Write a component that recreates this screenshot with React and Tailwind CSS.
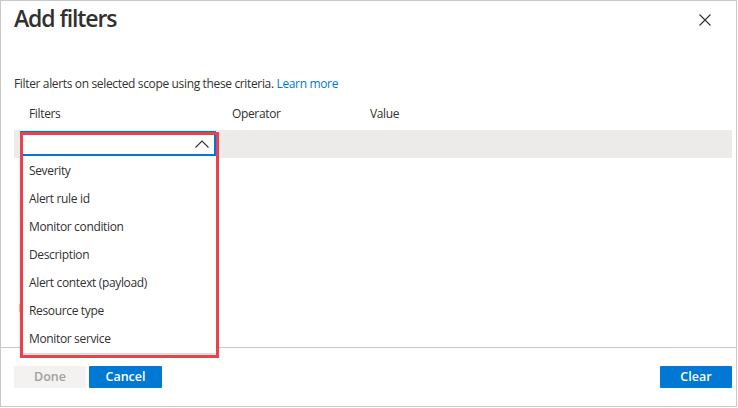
export default function App() {
  const options = [
    "Severity",
    "Alert rule id",
    "Monitor condition",
    "Description",
    "Alert context (payload)",
    "Resource type",
    "Monitor service",
  ];
  return (
    <div className="w-[738px] h-[408px] bg-white font-['Segoe_UI','Open_Sans',sans-serif] text-[#323130]">
      <div className="w-[737px] h-[407px] border border-[#c8c8c8] flex flex-col">
        <div className="h-[60px] flex justify-between items-start pl-[13px] pr-[25px]">
          <h1 className="text-[23px] leading-[32px] font-semibold tracking-[-1.1px] mt-[1px]">Add filters</h1>
          <svg width="12" height="12" viewBox="0 0 12 12" className="mt-[13px]">
            <path d="M0.5 0.5 L11.5 11.5 M11.5 0.5 L0.5 11.5" stroke="#323130" strokeWidth="1.1" fill="none" />
          </svg>
        </div>
        <div className="flex-1 flex flex-col pl-[13px] pr-[4px]">
          <p className="text-[12px] tracking-[-0.35px] leading-[20px] mt-[13px]">
            Filter alerts on selected scope using these criteria.{" "}
            <span className="text-[#0078d4]">Learn more</span>
          </p>
          <div className="flex text-[12px] tracking-[-0.35px] leading-[20px] mt-[10px] pl-[15px]">
            <span className="w-[203px]">Filters</span>
            <span className="w-[138px]">Operator</span>
            <span>Value</span>
          </div>
          <div className="relative h-[28px] bg-[#edebe9] mt-[6px]">
            <div className="absolute left-[6px] top-[1px] w-[196px] z-10">
              <div className="h-[25px] border-2 border-[#0078d4] bg-white flex items-center justify-end pr-[5px]">
                <svg width="14" height="8" viewBox="0 0 14 8">
                  <path d="M0.5 7.5 L7 1 L13.5 7.5" stroke="#323130" strokeWidth="1.1" fill="none" />
                </svg>
              </div>
              <div className="bg-white shadow-[0_2px_3px_rgba(0,0,0,0.18)] pt-[1px]">
                {options.map((o) => (
                  <div key={o} className="h-[28px] flex items-center pl-[9px] text-[12px] tracking-[-0.35px]">
                    {o}
                  </div>
                ))}
              </div>
            </div>
            <div className="absolute left-[6px] top-[2px] w-[199px] h-[226px] border-[3px] border-[#e8434a] z-20 pointer-events-none" />
            <div className="absolute left-[5px] top-[174px] w-[2px] h-[8px] bg-[#f2c8a0]" />
          </div>
        </div>
        <div className="h-[59px] border-t border-[#c8c8c8] flex items-start justify-between pt-[18px] pl-[13px] pr-[4px]">
          <div className="flex gap-[3px]">
            <button className="w-[72px] h-[22px] bg-[#f3f2f1] text-[#a19f9d] text-[12.5px] font-semibold rounded-[1px]">Done</button>
            <button className="w-[73px] h-[22px] bg-[#0078d4] text-white text-[12.5px] font-semibold rounded-[1px]">Cancel</button>
          </div>
          <button className="w-[72px] h-[22px] bg-[#0078d4] text-white text-[12.5px] font-semibold rounded-[1px]">Clear</button>
        </div>
      </div>
    </div>
  );
}
